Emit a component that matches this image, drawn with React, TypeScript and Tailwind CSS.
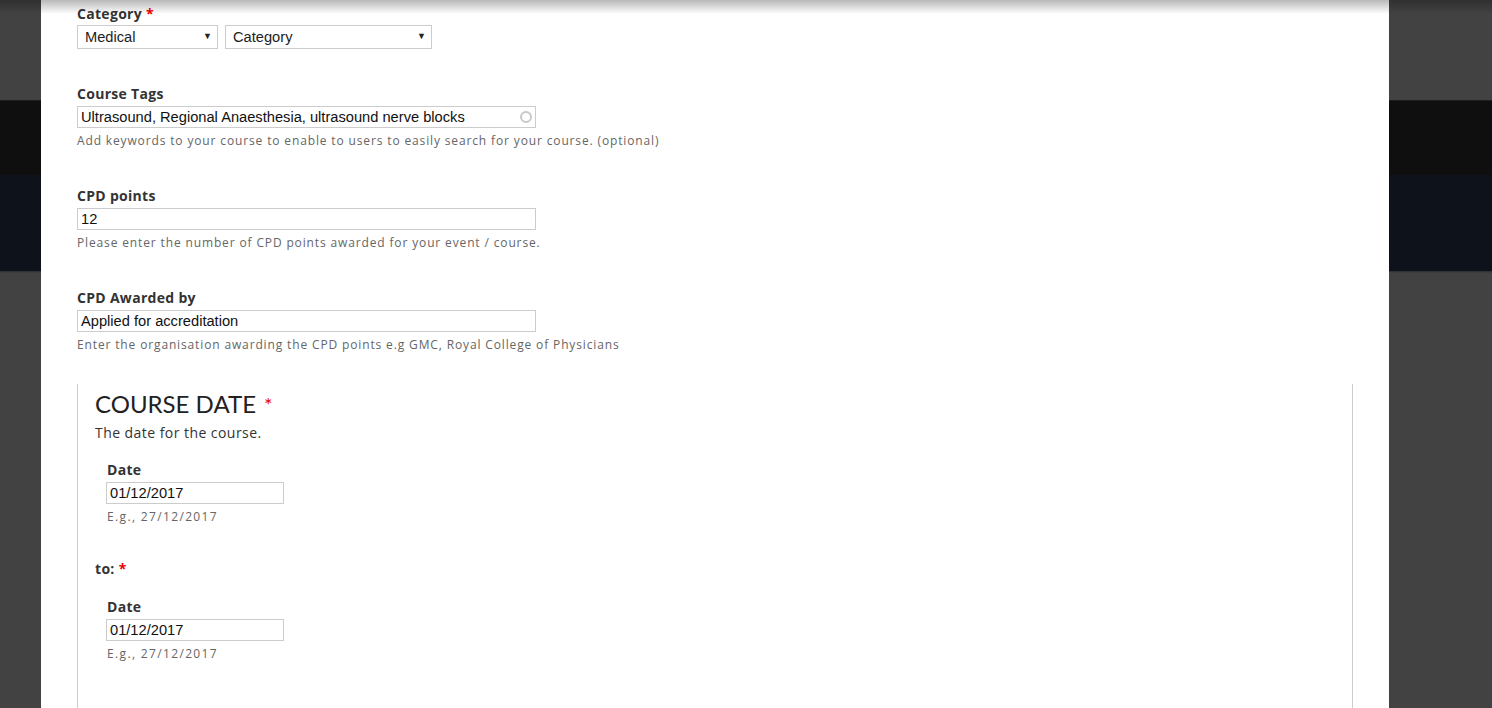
import React from "react";

const sans = { fontFamily: '"Open Sans", "DejaVu Sans", sans-serif' };
const arial = { fontFamily: '"Liberation Sans", Arial, sans-serif' };

function Label({ children, req }: { children: React.ReactNode; req?: boolean }) {
  return (
    <div className="text-[14px] leading-[20px] font-bold text-[#333] tracking-[0.3px]" style={sans}>
      {children}
      {req && <span className="text-[#e00] ml-[4px]">*</span>}
    </div>
  );
}

function Desc({ children, wide }: { children: React.ReactNode; wide?: boolean }) {
  return (
    <div
      className={`text-[12px] leading-[18px] text-[#666] mt-[4px] ${wide ? "tracking-[1.35px]" : "tracking-[0.86px]"}`}
      style={sans}
    >
      {children}
    </div>
  );
}

function TextInput({ value, w, icon }: { value: string; w: string; icon?: boolean }) {
  return (
    <div
      className={`relative h-[22px] border border-[#ccc] bg-white flex items-center pl-[3px] text-[14.67px] text-[#111] ${w}`}
      style={arial}
    >
      {value}
      {icon && (
        <span className="absolute right-[3px] top-[4px] w-[12px] h-[12px] rounded-full border-[2px] border-[#c8c8c8]" />
      )}
    </div>
  );
}

function Select({ value, w }: { value: string; w: string }) {
  return (
    <div
      className={`h-[24px] border border-[#ccc] bg-white flex items-center justify-between pl-[7px] pr-[5px] text-[14.67px] text-[#222] ${w}`}
      style={arial}
    >
      <span>{value}</span>
      <span className="text-[9px] text-[#222]">▼</span>
    </div>
  );
}

export default function App() {
  return (
    <div
      className="relative h-[708px] w-[1492px] overflow-hidden bg-[linear-gradient(to_bottom,#424242_0px,#424242_100px,#2e2e2e_100px,#0f0f10_101px,#0f0f10_175px,#0e121a_175px,#0e121a_271px,#2c2e33_271px,#424242_273px,#424242_100%)]"
    >
      <div className="ml-[41px] w-[1348px] h-full bg-white px-[36px] pt-[4px]">
        <Label req>Category</Label>
        <div className="flex gap-[7px] mt-[1px]">
          <Select value="Medical" w="w-[141px]" />
          <Select value="Category" w="w-[207px]" />
        </div>

        <div className="mt-[35px]">
          <Label>Course Tags</Label>
          <div className="mt-[2px]">
            <TextInput value="Ultrasound, Regional Anaesthesia, ultrasound nerve blocks" w="w-[459px]" icon />
          </div>
          <Desc>Add keywords to your course to enable to users to easily search for your course. (optional)</Desc>
        </div>

        <div className="mt-[36px]">
          <Label>CPD points</Label>
          <div className="mt-[2px]">
            <TextInput value="12" w="w-[459px]" />
          </div>
          <Desc>Please enter the number of CPD points awarded for your event / course.</Desc>
        </div>

        <div className="mt-[36px]">
          <Label>CPD Awarded by</Label>
          <div className="mt-[2px]">
            <TextInput value="Applied for accreditation" w="w-[459px]" />
          </div>
          <Desc>Enter the organisation awarding the CPD points e.g GMC, Royal College of Physicians</Desc>
        </div>

        <div className="mt-[30px] border-l border-r border-[#ccc] h-[400px] pl-[17px] pt-[5px]">
          <div className="text-[24px] leading-[30px] text-[#222]" style={{ fontFamily: 'Lato, "Open Sans", sans-serif' }}>
            COURSE DATE<span className="text-[#e00] text-[20px] ml-[8px] align-top">*</span>
          </div>
          <div className="text-[14px] leading-[20px] text-[#333] mt-[4px] tracking-[0.45px]" style={sans}>
            The date for the course.
          </div>

          <div className="pl-[11px] mt-[17px]">
            <div className="pl-[1px]">
              <Label>Date</Label>
            </div>
            <div className="mt-[2px]">
              <TextInput value="01/12/2017" w="w-[178px]" />
            </div>
            <div className="pl-[1px]">
              <Desc wide>E.g., 27/12/2017</Desc>
            </div>
          </div>

          <div className="mt-[33px]">
            <Label req>to:</Label>
          </div>

          <div className="pl-[11px] mt-[18px]">
            <div className="pl-[1px]">
              <Label>Date</Label>
            </div>
            <div className="mt-[2px]">
              <TextInput value="01/12/2017" w="w-[178px]" />
            </div>
            <div className="pl-[1px]">
              <Desc wide>E.g., 27/12/2017</Desc>
            </div>
          </div>
        </div>
      </div>
      <div className="absolute left-0 right-0 top-0 h-[14px] bg-[linear-gradient(to_bottom,rgba(0,0,0,0.28),rgba(0,0,0,0))]" />
    </div>
  );
}
